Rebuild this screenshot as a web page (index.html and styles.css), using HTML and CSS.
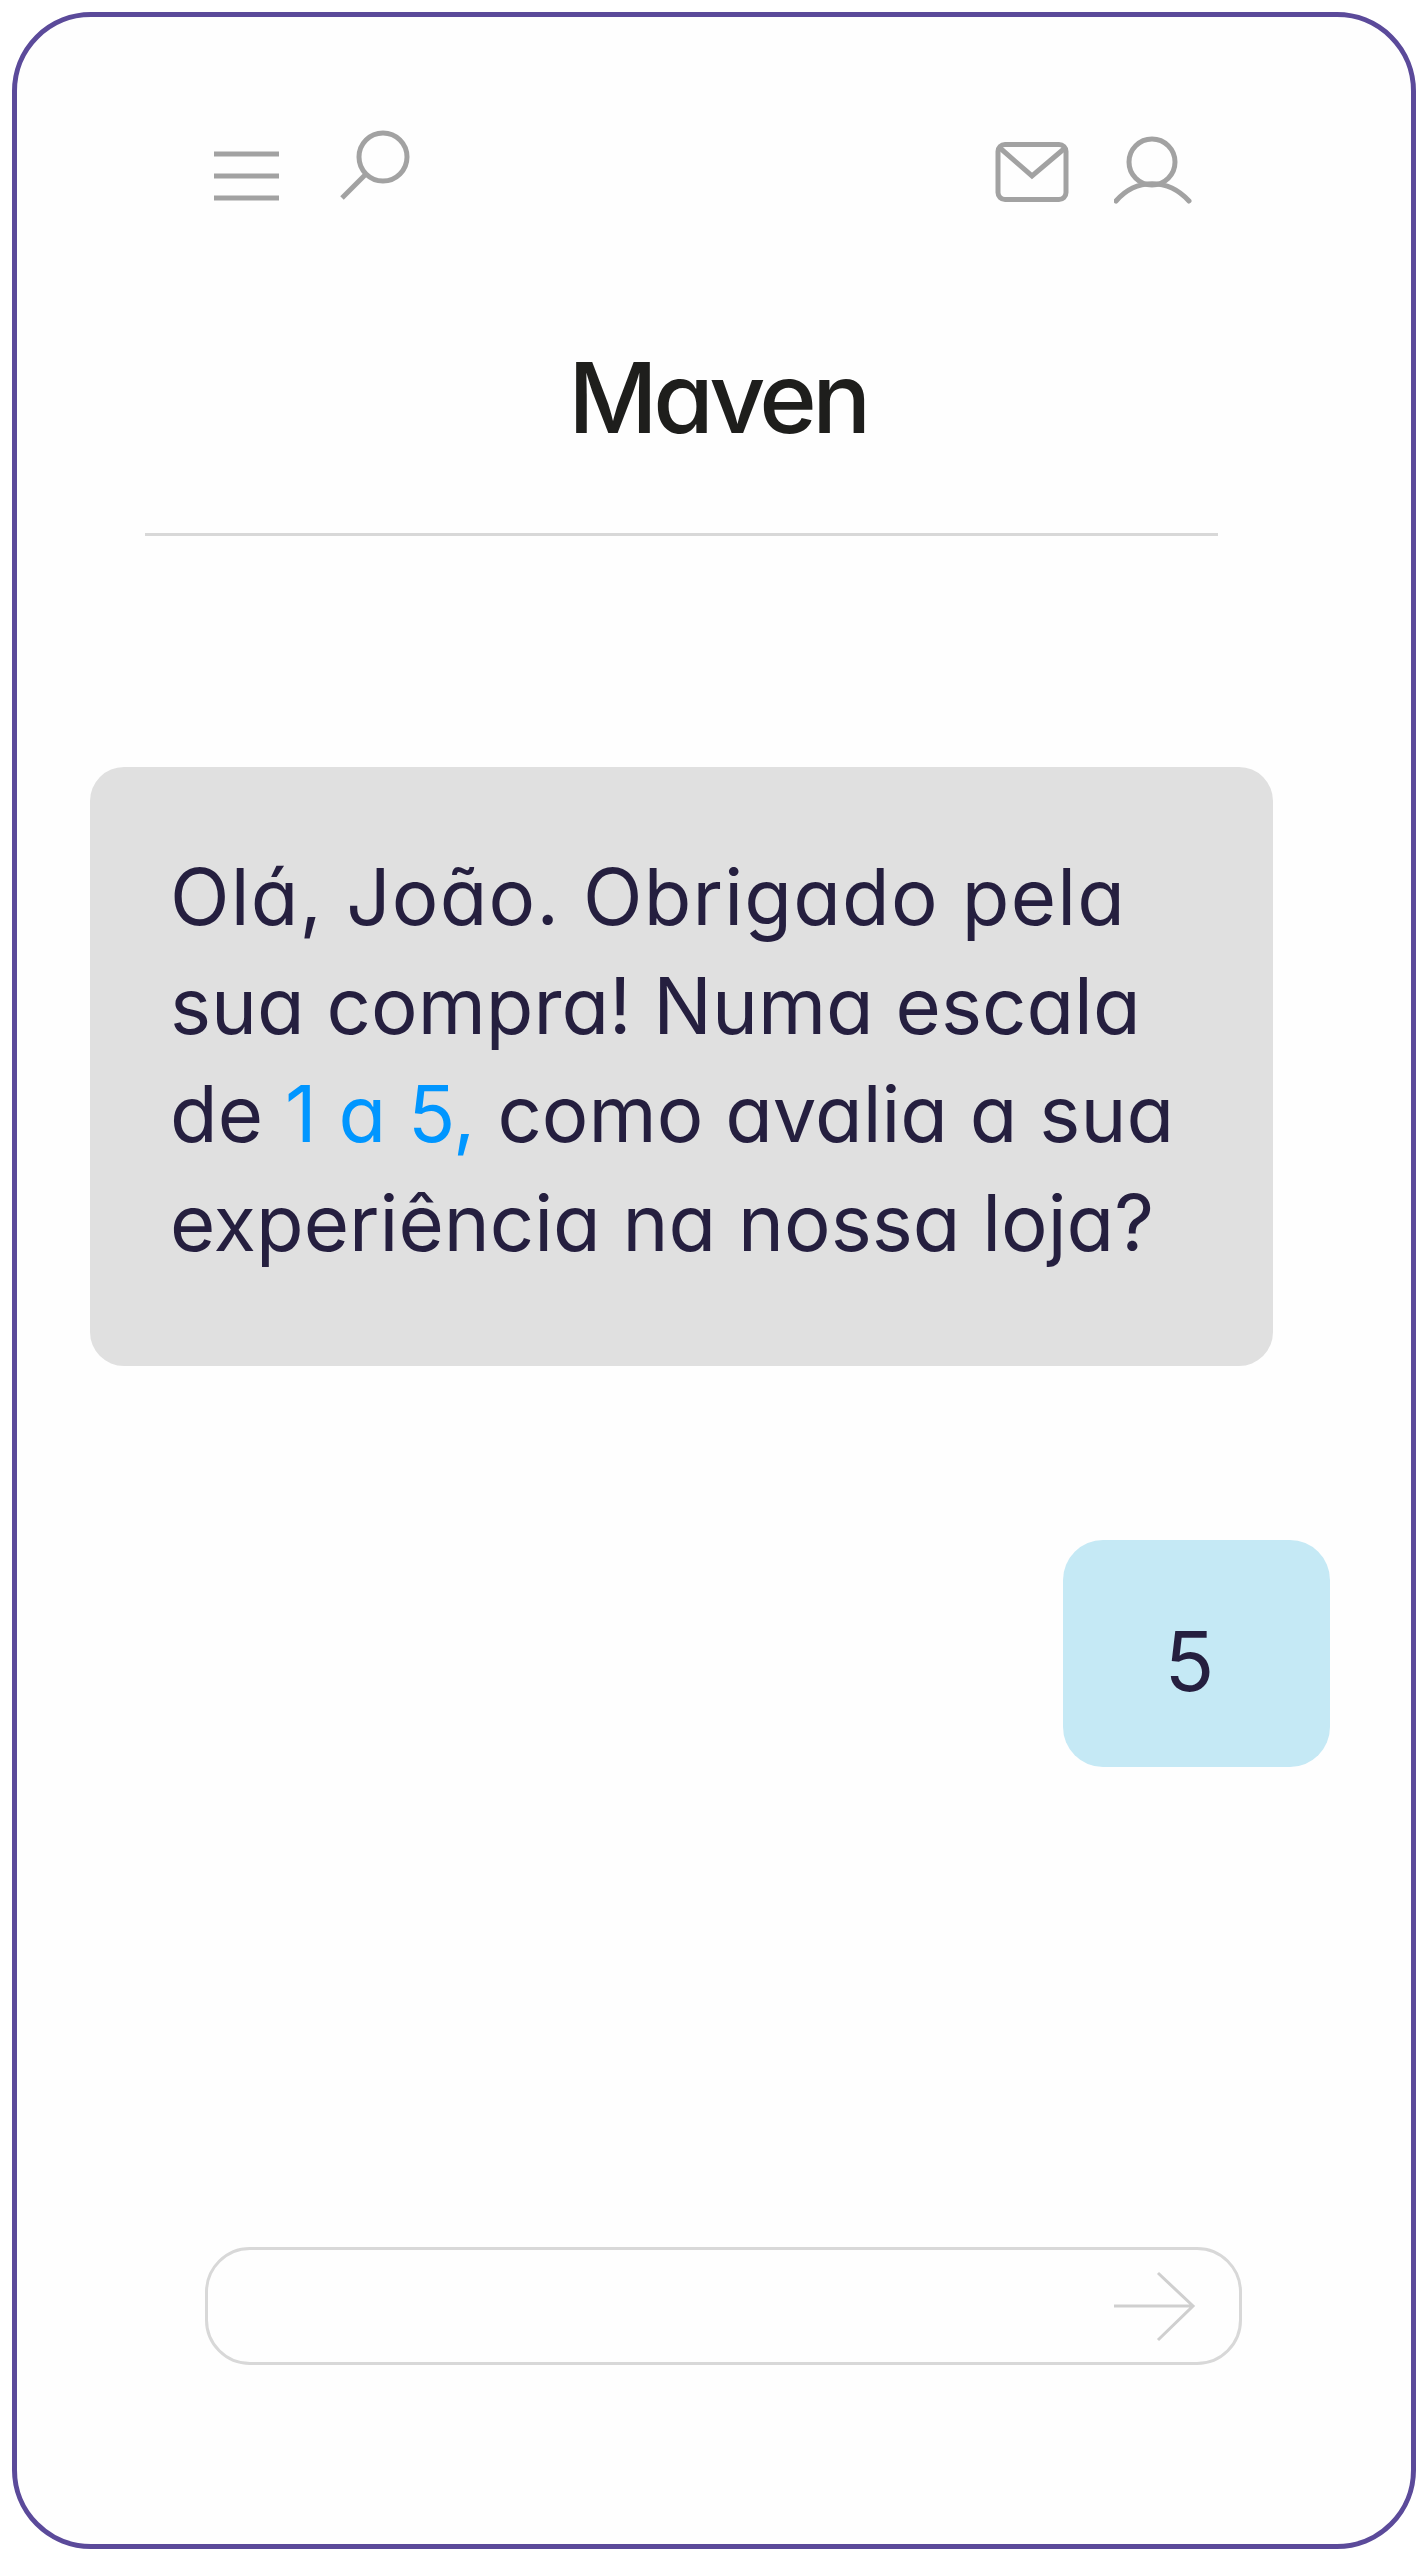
FILE: index.html
```html
<!DOCTYPE html>
<html lang="pt">

<head>
    <meta charset="UTF-8">
    <meta name="viewport" content="width=device-width, initial-scale=1.0">
    <title>Maven</title>
    <link rel="stylesheet" href="styles.css">
</head>

<body>
    <div class="phone">
        <header class="top-bar">
            <div class="icon-group icon-group-left">
                <!-- Menu -->
                <svg class="icon" width="65" height="80" viewBox="0 0 65 80">
                    <path d="M0 29H65M0 51H65M0 73H65" />
                </svg>
                <!-- Busca -->
                <svg class="icon" width="70" height="80" viewBox="0 0 70 80">
                    <circle cx="43" cy="32" r="24" />
                    <path d="M26 49L2 73" />
                </svg>
            </div>
            <div class="icon-group icon-group-right">
                <!-- Mensagens -->
                <svg class="icon" width="76" height="80" viewBox="0 0 76 80">
                    <rect x="4" y="19.5" width="68" height="55" rx="7" />
                    <path d="M6 23L38 51L71 23" />
                </svg>
                <!-- Perfil -->
                <svg class="icon" width="78" height="80" viewBox="0 0 78 80">
                    <circle cx="38" cy="37" r="23" />
                    <path class="round" d="M2 76C22 53 54 53 75 76" />
                </svg>
            </div>
        </header>

        <h1 class="brand">Maven</h1>
        <hr class="divider">

        <section class="chat">
            <div class="bubble bubble-bot">
                <span class="first-line">Olá, João. Obrigado pela</span><br>
                sua compra! Numa escala<br>
                de <span class="highlight">1 a 5,</span> como avalia a sua<br>
                experiência na nossa loja?
            </div>
            <div class="bubble bubble-user">5</div>
        </section>

        <form class="reply-box">
            <svg class="send" width="84" height="72" viewBox="0 0 84 72">
                <path d="M2 36H81M46 3L81 36L46 70" />
            </svg>
        </form>
    </div>
</body>

</html>
```

FILE: styles.css
```css
body {
    margin: 0;
    background-color: #fff;
    font-family: 'Inter', 'Liberation Sans', sans-serif;
    font-feature-settings: 'cv11' 1;
    color: #251f3f;
}

.phone {
    box-sizing: border-box;
    width: 1404px;
    height: 2537px;
    margin: 12px;
    border: 5px solid #5b4a9a;
    border-radius: 79px;
    background-color: #fefefe;
    display: flex;
    flex-direction: column;
}

.top-bar {
    display: flex;
    justify-content: space-between;
    padding: 108px 219px 0 197px;
}

.icon-group {
    display: flex;
}

.icon-group-left {
    gap: 61px;
}

.icon-group-right {
    gap: 44px;
}

.icon {
    fill: none;
    stroke: #a2a2a2;
    stroke-width: 5;
}

.icon .round {
    stroke-linecap: round;
}

.brand {
    margin: 143px 0 0 7px;
    color: #1e1e1c;
    font-size: 98px;
    font-weight: 500;
    letter-spacing: -4.5px;
    line-height: 100px;
    text-align: center;
}

.divider {
    width: 1073px;
    height: 3px;
    margin: 85px 0 0 128px;
    border: 0;
    background-color: #d8d8d8;
}

.chat {
    display: flex;
    flex-direction: column;
    flex: 1;
}

.bubble {
    box-sizing: border-box;
    font-size: 77.8px;
    font-weight: 400;
    line-height: 108.67px;
}

.bubble-bot {
    width: 1183px;
    height: 599px;
    margin: 231px 0 0 73px;
    padding: 76px 40px 0 80px;
    border-radius: 34px;
    background-color: #e0e0e0;
    white-space: nowrap;
}

.first-line {
    letter-spacing: 1.2px;
}

.highlight {
    color: #0096ff;
}

.bubble-user {
    display: flex;
    align-items: center;
    justify-content: center;
    width: 267px;
    height: 227px;
    margin: 174px 0 0 1046px;
    padding: 18px 14px 0 0;
    border-radius: 40px;
    background-color: #c5e9f5;
    font-size: 82px;
}

.reply-box {
    box-sizing: border-box;
    display: flex;
    align-items: center;
    justify-content: flex-end;
    width: 1037px;
    height: 118px;
    margin: 0 0 179px 188px;
    padding-right: 43px;
    border: 3px solid #d8d8d8;
    border-radius: 45px;
}

.send {
    fill: none;
    stroke: #cfcfcf;
    stroke-width: 3;
}
```
